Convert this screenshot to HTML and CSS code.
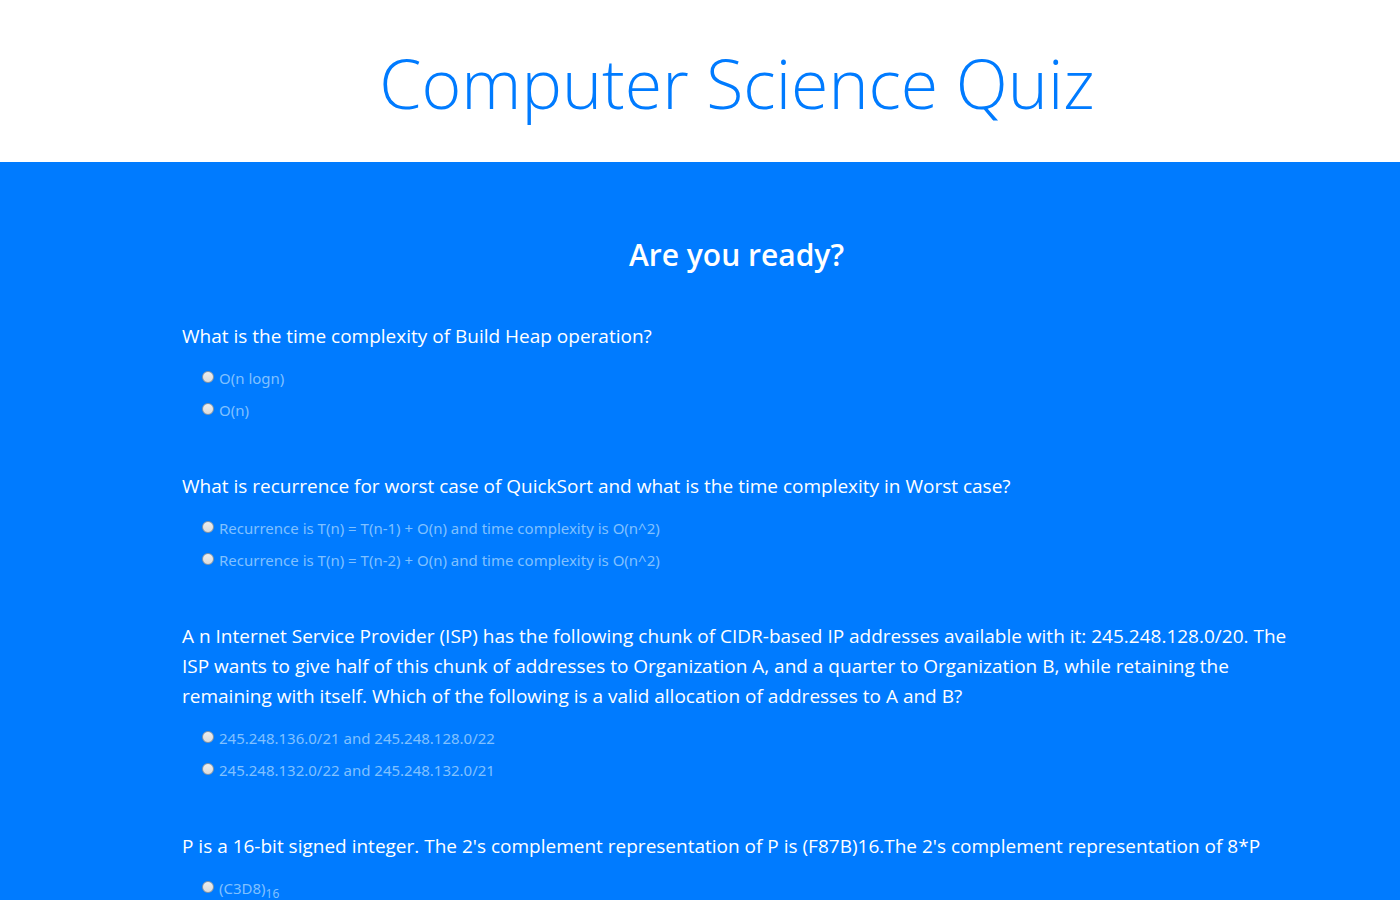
FILE: index.html
```html
<!DOCTYPE html>
<html lang="en">
<head>
<meta charset="utf-8">
<title>Computer Science Quiz</title>
<link rel="stylesheet" href="styles.css">
</head>
<body>
<header class="banner"><h1 class="title">Computer Science Quiz</h1></header>
<main class="quiz">
<h2 class="subtitle">Are you ready?</h2>
<form class="questions">
<fieldset class="question">
<legend class="prompt">What is the time complexity of Build Heap operation?</legend>
<label class="option"><input class="radio" type="radio" name="q1"><span>O(n logn)</span></label>
<label class="option"><input class="radio" type="radio" name="q1"><span>O(n)</span></label>
</fieldset>
<fieldset class="question">
<legend class="prompt">What is recurrence for worst case of QuickSort and what is the time complexity in Worst case?</legend>
<label class="option"><input class="radio" type="radio" name="q2"><span>Recurrence is T(n) = T(n-1) + O(n) and time complexity is O(n^2)</span></label>
<label class="option"><input class="radio" type="radio" name="q2"><span>Recurrence is T(n) = T(n-2) + O(n) and time complexity is O(n^2)</span></label>
</fieldset>
<fieldset class="question">
<legend class="prompt">A n Internet Service Provider (ISP) has the following chunk of CIDR-based IP addresses available with it: 245.248.128.0/20. The ISP wants to give half of this chunk of addresses to Organization A, and a quarter to Organization B, while retaining the remaining with itself. Which of the following is a valid allocation of addresses to A and B?</legend>
<label class="option"><input class="radio" type="radio" name="q3"><span>245.248.136.0/21 and 245.248.128.0/22</span></label>
<label class="option"><input class="radio" type="radio" name="q3"><span>245.248.132.0/22 and 245.248.132.0/21</span></label>
</fieldset>
<fieldset class="question">
<legend class="prompt">P is a 16-bit signed integer. The 2's complement representation of P is (F87B)16.The 2's complement representation of 8*P</legend>
<label class="option"><input class="radio" type="radio" name="q4"><span>(C3D8)<sub class="base">16</sub></span></label>
</fieldset>
</form>
</main>
</body>
</html>
```
FILE: styles.css
```css
* {
  box-sizing: border-box;
}

html {
  background: #007bff;
}

body {
  margin: 0;
  font-family: "Segoe UI", "Open Sans", "Noto Sans", sans-serif;
  font-size: 15px;
  color: #fff;
}

.banner {
  padding: 26px 0 22px 74px;
  background: #fff;
  text-align: center;
}

.title {
  margin: 0;
  font-size: 68px;
  line-height: 114px;
  font-weight: 300;
  color: #007bff;
}

.quiz {
  padding: 73px 109px 0 182px;
  background: #007bff;
}

.subtitle {
  margin: 0 0 46px;
  font-size: 30px;
  line-height: 40px;
  font-weight: 600;
  text-align: center;
}

.question {
  min-width: 0;
  margin: 0 0 45px;
  padding: 0;
  border: 0;
}

.prompt {
  padding: 0;
  margin-bottom: 11px;
  font-size: 19px;
  line-height: 30px;
}

.option {
  display: flex;
  align-items: center;
  gap: 5px;
  height: 32px;
  padding-left: 20px;
  font-family: "Segoe UI", "Noto Sans", sans-serif;
  color: #80c1ff;
}

.radio {
  appearance: none;
  width: 12px;
  height: 12px;
  margin: 0 0 2px;
  border: 1px solid #8a96a3;
  border-radius: 50%;
  background: linear-gradient(#eee, #dcdcdc);
}

.radio:checked {
  background: radial-gradient(circle, #333 0 3px, #e6e6e6 4px);
}

.base {
  font-size: 12px;
  line-height: 0;
}
```
